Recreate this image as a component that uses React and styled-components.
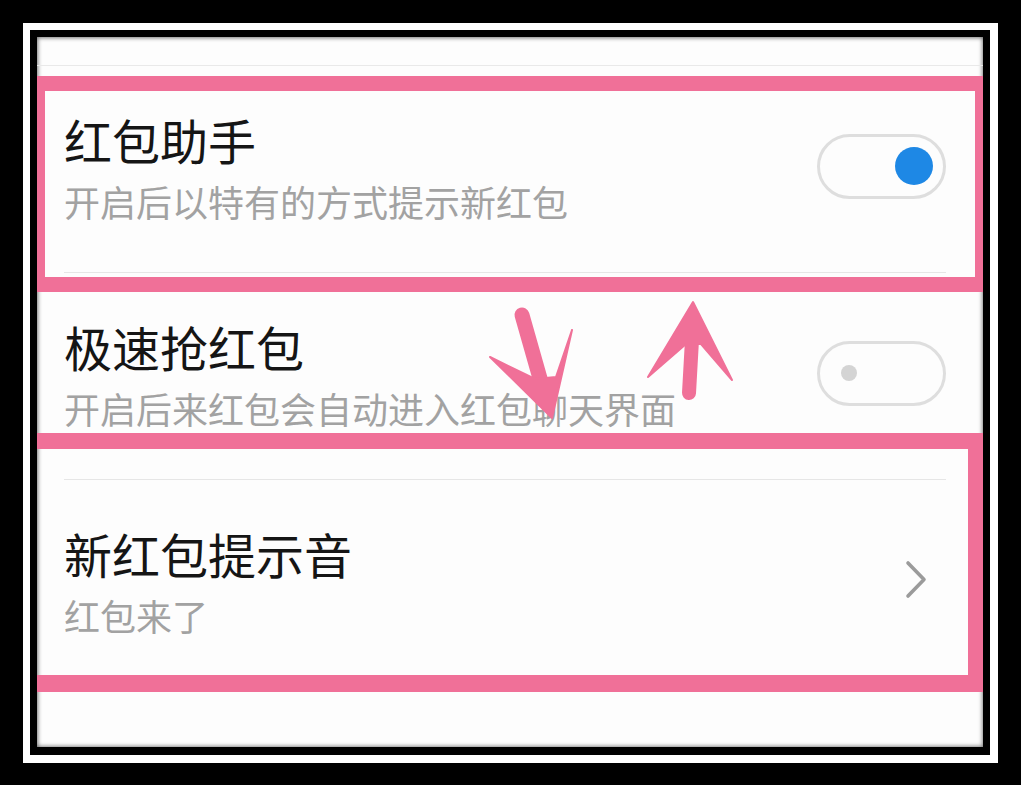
import React from 'react';
import styled, { createGlobalStyle } from 'styled-components';

const GlobalStyle = createGlobalStyle`
	html, body {
		margin: 0;
		padding: 0;
		background: #000;
	}

	body {
		font-family: "Noto Sans CJK SC", "Noto Sans", sans-serif;
	}
`

const PINK = '#f07098';

const Frame = styled.div`
	width: 1021px;
	height: 785px;
	box-sizing: border-box;
	background: #000;
	padding: 23px 23px 22px 23px;
`

const Mat = styled.div`
	height: 100%;
	box-sizing: border-box;
	background: #fff;
	padding: 7px 8px 8px 7px;
`

const Bezel = styled.div`
	height: 100%;
	box-sizing: border-box;
	background: #000;
	padding: 7px 7px 8px 7px;
`

const Screen = styled.div`
	position: relative;
	height: 100%;
	background: #fdfdfd;
	overflow: hidden;
	box-shadow: inset 1px 1px 4px rgba(0, 0, 0, 0.45), inset -1px -1px 4px rgba(0, 0, 0, 0.35);
`

const TopStub = styled.div`
	height: 28px;
	border-bottom: 1px solid #e9e9e9;
`

const Row = styled.div`
	display: flex;
	align-items: center;
	box-sizing: border-box;
	height: 207px;
	margin: 0 37px 0 27px;
	padding-bottom: 6px;
	border-bottom: 1px solid ${p => p.$divider ? '#e6e6e6' : 'transparent'};
`

const TextBlock = styled.div`
	display: flex;
	flex-direction: column;
`

const Title = styled.div`
	font-size: 48px;
	line-height: 56px;
	color: #151515;
	white-space: nowrap;
`

const Subtitle = styled.div`
	font-size: 36px;
	line-height: 40px;
	margin-top: 14px;
	color: #a2a2a2;
	white-space: nowrap;
`

const Switch = styled.div`
	margin-left: auto;
	flex-shrink: 0;
	width: 129px;
	height: 65px;
	box-sizing: border-box;
	border: 3px solid #dedede;
	border-radius: 33px;
	display: flex;
	align-items: center;
	justify-content: ${p => p.$on ? 'flex-end' : 'flex-start'};
	padding: ${p => p.$on ? '0 10px' : '0 21px'};
`

const Knob = styled.span`
	width: ${p => p.$on ? 38 : 16}px;
	height: ${p => p.$on ? 38 : 16}px;
	border-radius: 50%;
	background: ${p => p.$on ? '#1e88e5' : '#d4d4d4'};
`

const Chevron = styled.svg`
	margin-left: auto;
	margin-right: 19px;
	flex-shrink: 0;
`

const Highlight = styled.div`
	position: absolute;
	left: 0;
	right: 0;
	top: ${p => p.$top}px;
	height: ${p => p.$height}px;
	box-sizing: border-box;
	border: solid ${PINK};
	border-width: ${p => p.$borders};
	pointer-events: none;
`

const Arrows = styled.svg`
	position: absolute;
	left: 0;
	top: 0;
	pointer-events: none;
`

const settings = [
	{ title: '红包助手', sub: '开启后以特有的方式提示新红包', control: 'on' },
	{ title: '极速抢红包', sub: '开启后来红包会自动进入红包聊天界面', control: 'off' },
	{ title: '新红包提示音', sub: '红包来了', control: 'link' },
];

const Control = ({ type }) => {
	if (type === 'link') {
		return (
			<Chevron width="22" height="40" viewBox="0 0 22 40">
				<polyline points="3,3 19,19.5 3,36" fill="none" stroke="#9b9b9b" strokeWidth="3.6" strokeLinecap="round" strokeLinejoin="round" />
			</Chevron>
		)
	}
	const on = type === 'on';
	return (
		<Switch $on={on}>
			<Knob $on={on} />
		</Switch>
	)
}

const App = () => {
	return (
		<Frame>
			<GlobalStyle />
			<Mat>
				<Bezel>
					<Screen>
						<TopStub />
						{settings.map((s, i) => (
							<Row key={s.title} $divider={i < settings.length - 1}>
								<TextBlock>
									<Title>{s.title}</Title>
									<Subtitle>{s.sub}</Subtitle>
								</TextBlock>
								<Control type={s.control} />
							</Row>
						))}

						<Highlight $top={39} $height={216} $borders="15px 8px 15px 8px" />
						<Highlight $top={396} $height={259} $borders="16px 15px 17px 0" />

						<Arrows width="946" height="710" viewBox="37 37 946 710">
							<g fill={PINK} stroke={PINK} strokeLinecap="round" strokeLinejoin="round">
								<line x1="522" y1="315" x2="545" y2="396" strokeWidth="15" />
								<polygon points="490,357 535,379 556,377 572,330 552,418" strokeWidth="2" />
								<line x1="689" y1="393" x2="693" y2="322" strokeWidth="14" />
								<polygon points="693,302 732,380 701,344 686,344 648,377" strokeWidth="2" />
							</g>
						</Arrows>
					</Screen>
				</Bezel>
			</Mat>
		</Frame>
	)
}

export default App;
